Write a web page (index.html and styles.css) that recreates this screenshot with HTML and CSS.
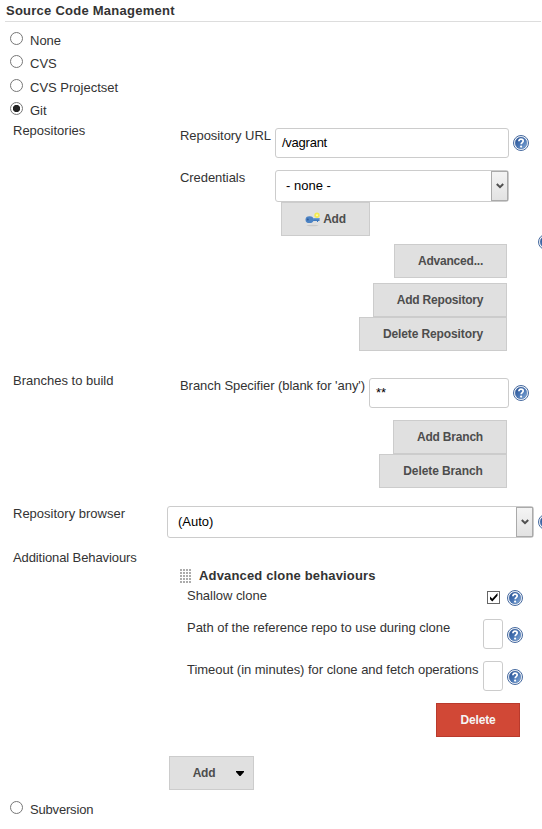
FILE: index.html
```html
<!DOCTYPE html>
<html lang="en">
<head>
<meta charset="utf-8">
<title>Source Code Management</title>
<link rel="stylesheet" href="styles.css">
</head>
<body>
<svg class="defs" aria-hidden="true">
  <defs>
    <linearGradient id="ball" x1="0" y1="0" x2="1" y2="1">
      <stop offset="0" stop-color="#284f8f"/><stop offset=".5" stop-color="#4674b4"/><stop offset="1" stop-color="#8db1da"/>
    </linearGradient>
    <symbol id="help" viewBox="0 0 16 16">
      <circle cx="8" cy="8" r="7.5" fill="#fff" stroke="#45699f"/>
      <circle cx="8" cy="8" r="5.9" fill="url(#ball)" stroke="#3b629f" stroke-width=".4"/>
      <path d="M5.9 6.3C5.9 4.8 6.8 4.2 8 4.2s2.2.7 2.2 1.9c0 1.5-2 1.5-2 3.1" fill="none" stroke="#fff" stroke-width="1.7"/>
      <circle cx="8.1" cy="11.6" r="1.1" fill="#fff"/>
    </symbol>
    <symbol id="chevron" viewBox="0 0 8 6"><path d="M.8 1 4 4.2 7.2 1" fill="none" stroke="#505050" stroke-width="2"/></symbol>
  </defs>
</svg>
<main class="page">
  <h1 class="heading">Source Code Management</h1>
  <label class="option"><span class="radio"></span><span class="option-text">None</span></label>
  <label class="option second"><span class="radio"></span><span class="option-text">CVS</span></label>
  <label class="option"><span class="radio"></span><span class="option-text">CVS Projectset</span></label>
  <label class="option"><span class="radio checked"></span><span class="option-text">Git</span></label>

  <section class="setting repositories">
    <div class="name">Repositories</div>
    <div class="content">
      <div class="field">
        <span class="field-label">Repository URL</span>
        <span class="input url">/vagrant</span>
        <svg class="help"><use href="#help"/></svg>
      </div>
      <div class="field credentials">
        <span class="field-label">Credentials</span>
        <div>
          <div class="select cred-select"><span>- none -</span><i class="arrow"><svg><use href="#chevron"/></svg></i></div>
          <button class="button add-key">
            <svg class="key" viewBox="0 0 16 16">
              <ellipse cx="7.5" cy="14.5" rx="6" ry=".8" fill="#c9c9c9"/>
              <path d="M7 7h7.5v3H13v1h-1v-1H7z" fill="#3d78bd"/>
              <ellipse cx="4.5" cy="8.7" rx="4" ry="3.4" fill="#4c83c4"/>
              <path d="M8 7.8h6" stroke="#81acd9"/>
              <circle cx="2.8" cy="8.5" r="1" fill="#305c9b"/>
              <circle cx="12" cy="4.3" r="2.7" fill="#f4ea52"/><circle cx="12" cy="4.3" r="1" fill="#fffbb0"/>
            </svg>Add</button>
        </div>
      </div>
      <div class="actions">
        <button class="button advanced">Advanced...</button>
        <button class="button add-repo">Add Repository</button>
        <button class="button delete-repo">Delete Repository</button>
      </div>
      <svg class="help edge"><use href="#help"/></svg>
    </div>
  </section>

  <section class="setting branches">
    <div class="name">Branches to build</div>
    <div class="content">
      <div class="field">
        <span class="field-label branch-label">Branch Specifier (blank for 'any')</span>
        <span class="input branch">**</span>
        <svg class="help"><use href="#help"/></svg>
      </div>
      <div class="actions branch-actions">
        <button class="button add-branch">Add Branch</button>
        <button class="button delete-branch">Delete Branch</button>
      </div>
    </div>
  </section>

  <section class="setting browser">
    <div class="name">Repository browser</div>
    <div class="content browser-content">
      <div class="select browser-select"><span>(Auto)</span><i class="arrow"><svg><use href="#chevron"/></svg></i></div>
      <svg class="help"><use href="#help"/></svg>
    </div>
  </section>

  <section class="setting behaviours">
    <div class="name additional">Additional Behaviours</div>
    <div class="content">
      <div class="behaviour-title"><span class="grip"></span><b>Advanced clone behaviours</b></div>
      <div class="behaviour shallow">
        <span class="behaviour-label">Shallow clone</span>
        <span class="checkbox"><svg viewBox="0 0 11 11"><path d="M2 4.5v2.7L4.3 9.5 9.5 3.7V1L4.3 6.7z"/></svg></span>
        <svg class="help"><use href="#help"/></svg>
      </div>
      <div class="behaviour">
        <span class="behaviour-label">Path of the reference repo to use during clone</span>
        <span class="input small"></span>
        <svg class="help"><use href="#help"/></svg>
      </div>
      <div class="behaviour">
        <span class="behaviour-label">Timeout (in minutes) for clone and fetch operations</span>
        <span class="input small"></span>
        <svg class="help"><use href="#help"/></svg>
      </div>
      <button class="button danger">Delete</button>
      <button class="button add-menu">Add<svg class="caret" viewBox="0 0 8 5"><path d="M0 0h8v1L4.5 5h-1L0 1z"/></svg></button>
    </div>
  </section>
  <label class="option last"><span class="radio"></span><span class="option-text">Subversion</span></label>
</main>
</body>
</html>
```
FILE: styles.css
```css
* { box-sizing: border-box; }
body { margin: 0; background: #fff; overflow: hidden; color: #333; font: 13px/18px "Liberation Sans", Arial, sans-serif; }
svg { display: block; flex: none; }
.defs { position: absolute; width: 0; height: 0; }
.page { width: 542px; height: 829px; overflow: hidden; }
.heading { margin: 0 0 8px 5px; padding: 1px 0 0 1px; width: 536px; height: 22px; border-bottom: 1px solid #ddd; font-size: 13px; line-height: 19px; letter-spacing: .25px; }
.option { display: flex; height: 23px; padding-left: 10px; }
.option.second { height: 24px; }
.option.last { letter-spacing: -.18px; }
.radio { width: 13px; height: 13px; margin: 2px 7px 0 0; border: 1px solid #777; border-radius: 50%; background: #fff; }
.radio.checked { background: radial-gradient(circle, #222 0 3.3px, #fff 4px); }
.option-text { padding-top: 2px; }
.setting { display: grid; grid-template-columns: 154px 375px; padding-left: 13px; }
.content { position: relative; }
.repositories { height: 250px; margin-top: -1px; }
.branches { height: 133px; }
.browser { height: 44px; }
.behaviours { height: 250px; }
.additional { letter-spacing: -.1px; }
.field { display: flex; align-items: flex-start; padding: 6px 0 0 13px; }
.field-label { width: 95px; margin-top: -1px; white-space: nowrap; letter-spacing: -.06px; }
.branch-label { width: 189px; }
.input { height: 30px; border: 1px solid #ccc; border-radius: 3px; padding: 5px 6px; color: #000; background: #fff; }
.url { width: 234px; letter-spacing: -.25px; }
.branch { width: 140px; }
.help { width: 16px; height: 16px; margin: 7px 0 0 4px; }
.edge { position: absolute; left: 371px; top: 112px; margin: 0; }
.credentials { padding-top: 12px; }
.select { display: flex; flex: none; justify-content: space-between; height: 32px; border: 1px solid #ccc; border-radius: 3px; padding-left: 10px; line-height: 30px; color: #000; }
.cred-select { width: 234px; }
.arrow { display: grid; place-items: center; width: 17px; border: 1px solid #aaa; background: linear-gradient(#f4f4f4, #e2e2e2); }
.arrow svg { width: 8px; height: 6px; }
.button { display: flex; align-items: center; justify-content: center; height: 34px; margin: 0; padding: 0; border: 1px solid #ccc; background: #e0e0e0; color: #4d4d4d; font: bold 12px/18px "Liberation Sans", Arial, sans-serif; letter-spacing: -.2px; white-space: nowrap; }
.add-key { width: 89px; margin-left: 6px; }
.key { width: 16px; height: 16px; margin-right: 2px; }
.actions { display: flex; flex-direction: column; align-items: flex-end; width: 340px; padding-top: 8px; }
.advanced { width: 113px; margin-bottom: 5px; }
.add-repo { width: 134px; }
.delete-repo { width: 148px; letter-spacing: -.12px; }
.branch-actions { padding-top: 12px; }
.add-branch { width: 114px; }
.delete-branch { width: 128px; letter-spacing: -.1px; }
.browser-content { display: flex; padding-top: 1px; }
.browser-select { width: 367px; }
.browser-content .help { margin: 8px 0 0 4px; }
.behaviour-title { display: flex; height: 37px; padding: 18px 0 0 13px; letter-spacing: .16px; }
.grip { width: 12px; height: 15px; margin: 2px 7px 0 0; background: radial-gradient(circle at 1px 1px, #aaa .7px, transparent 1.1px) 0 0 / 3px 3px; }
.behaviour { display: flex; height: 42px; padding: 5px 0 0 20px; letter-spacing: -.03px; }
.behaviour .help { margin-top: 8px; }
.behaviour-label { width: 296px; white-space: nowrap; }
.shallow { height: 28px; padding-top: 1px; }
.checkbox { width: 13px; height: 13px; margin: 4px 3px 0 4px; border: 1px solid #666; }
.shallow .help { margin-top: 3px; }
.small { width: 20px; padding: 0; }
.danger { width: 84px; margin: 5px 0 19px 269px; border-color: #b93a2c; background: #d14836; color: #f5f5f5; }
.add-menu { width: 85px; margin-left: 2px; padding-left: 14px; }
.caret { width: 8px; height: 5px; margin-left: 21px; }
```
